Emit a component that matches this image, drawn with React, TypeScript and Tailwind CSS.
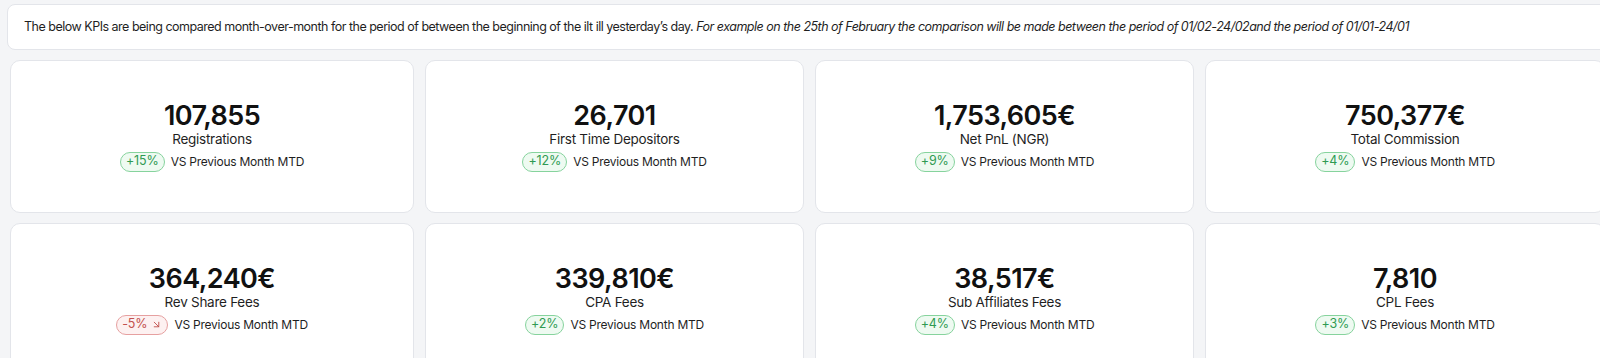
import { ArrowDownRight } from "lucide-react";

type Kpi = {
  value: string;
  label: string;
  change: string;
  up: boolean;
};

const KPIS: Kpi[] = [
  { value: "107,855", label: "Registrations", change: "+15%", up: true },
  { value: "26,701", label: "First Time Depositors", change: "+12%", up: true },
  { value: "1,753,605€", label: "Net PnL (NGR)", change: "+9%", up: true },
  { value: "750,377€", label: "Total Commission", change: "+4%", up: true },
  { value: "364,240€", label: "Rev Share Fees", change: "-5%", up: false },
  { value: "339,810€", label: "CPA Fees", change: "+2%", up: true },
  { value: "38,517€", label: "Sub Affiliates Fees", change: "+4%", up: true },
  { value: "7,810", label: "CPL Fees", change: "+3%", up: true },
];

function KpiCard({ kpi }: { kpi: Kpi }) {
  return (
    <div className="flex h-[153px] flex-col items-center justify-center rounded-[10px] border border-[#e3e5ea] bg-white">
      <div className="text-[27px] font-semibold leading-[28px] tracking-[-0.02em] text-[#111111]">
        {kpi.value}
      </div>
      <div className="text-[13.5px] leading-[18px] tracking-[-0.02em] text-[#1f1f1f]">{kpi.label}</div>
      <div className="mt-[4px] flex items-center gap-[6px]">
        {kpi.up ? (
          <span className="flex h-[20px] items-center rounded-full border border-[#86d39d] bg-[#eefaf1] px-[5px] text-[12.5px] tracking-[-0.01em] text-[#2f9a52]">
            {kpi.change}
          </span>
        ) : (
          <span className="flex h-[20px] items-center gap-[4px] rounded-full border border-[#e6a0a0] bg-[#fdf1f1] px-[5px] text-[12.5px] tracking-[-0.01em] text-[#c2514e]">
            {kpi.change}
            <ArrowDownRight size={11} strokeWidth={2} />
          </span>
        )}
        <span className="text-[12px] tracking-[-0.02em] text-[#1f1f1f]">VS Previous Month MTD</span>
      </div>
    </div>
  );
}

export default function App() {
  return (
    <div className="h-[358px] w-[1600px] overflow-hidden bg-[#f4f5f7] pt-[4px] font-['Inter','Liberation_Sans',sans-serif]">
      <div className="ml-[7px] flex h-[46px] w-[1620px] items-center rounded-lg border border-[#e3e5ea] bg-white px-[16px] text-[12.5px] tracking-[-0.04em] text-[#1f1f1f]">
        <p>
          The below KPIs are being compared month-over-month for the period of between the beginning of the ilt ill
          yesterday’s day.{" "}
          <em>
            For example on the 25th of February the comparison will be made between the period of 01/02-24/02and the
            period of 01/01-24/01
          </em>
        </p>
      </div>

      <div className="ml-[10px] mt-[10px] grid grid-cols-[404px_379px_379px_400px] gap-[11px] gap-y-[10px]">
        {KPIS.map((kpi) => (
          <KpiCard key={kpi.label} kpi={kpi} />
        ))}
      </div>
    </div>
  );
}
